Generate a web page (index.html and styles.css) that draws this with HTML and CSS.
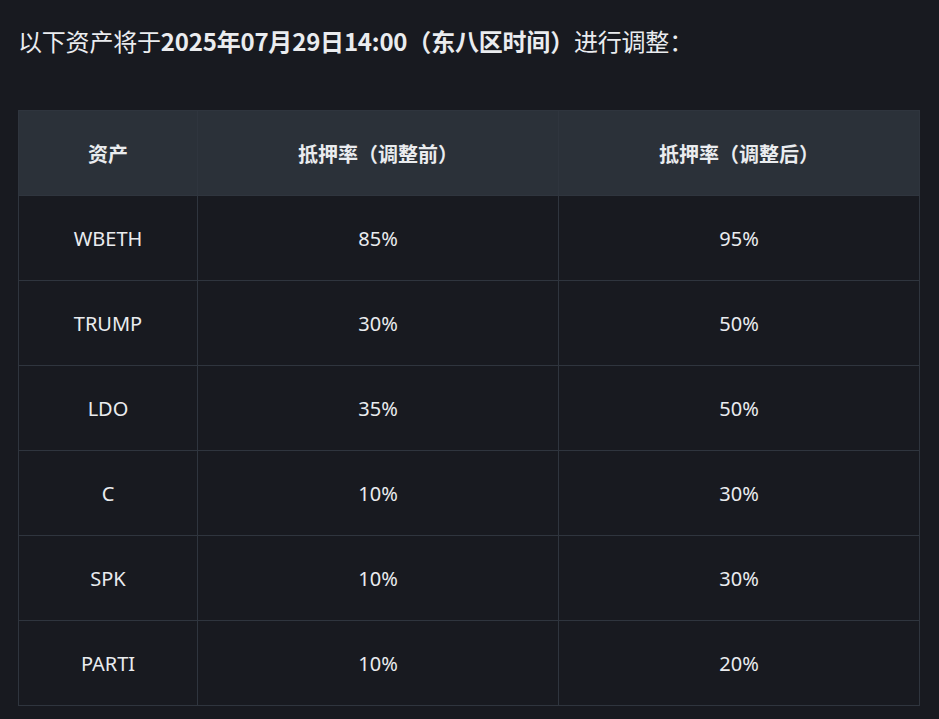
FILE: index.html
```html
<!DOCTYPE html>
<html lang="zh-CN">
<head>
<meta charset="utf-8">
<title>抵押率调整</title>
<link rel="stylesheet" href="styles.css">
</head>
<body>
<div class="page">
  <p class="intro">以下资产将于<strong>2025年07月29日14:00（东八区时间）</strong>进行调整：</p>
  <table class="rates">
    <thead>
      <tr><th class="c1">资产</th><th class="c2">抵押率（调整前）</th><th>抵押率（调整后）</th></tr>
    </thead>
    <tbody>
      <tr><td>WBETH</td><td>85%</td><td>95%</td></tr>
      <tr><td>TRUMP</td><td>30%</td><td>50%</td></tr>
      <tr><td>LDO</td><td>35%</td><td>50%</td></tr>
      <tr><td>C</td><td>10%</td><td>30%</td></tr>
      <tr><td>SPK</td><td>10%</td><td>30%</td></tr>
      <tr><td>PARTI</td><td>10%</td><td>20%</td></tr>
    </tbody>
  </table>
</div>
</body>
</html>
```
FILE: styles.css
```css
html, body {
  margin: 0;
  padding: 0;
  background: #181a20;
}
.page {
  padding: 17px 19px 0 18px;
  color: #eaecef;
  font-family: "Noto Sans", "Noto Sans CJK SC", sans-serif;
}
.intro {
  margin: 0;
  font-size: 24px;
  line-height: 48px;
  font-family: "Noto Sans CJK SC", sans-serif;
  letter-spacing: -0.2px;
}
.intro strong {
  font-weight: 700;
}
.rates {
  margin-top: 45px;
  width: 100%;
  border-collapse: collapse;
  border: 1px solid #2f353e;
  font-size: 20px;
}
.rates th, .rates td {
  border: 1px solid #2f353e;
  text-align: center;
  vertical-align: middle;
  padding: 0;
}
.rates th {
  height: 84px;
  background: #2b3139;
  font-weight: 700;
  font-family: "Noto Sans CJK SC", sans-serif;
  font-size: 20px;
}
.rates td {
  height: 84px;
}
.c1 { width: 178px; }
.c2 { width: 360px; }
```
